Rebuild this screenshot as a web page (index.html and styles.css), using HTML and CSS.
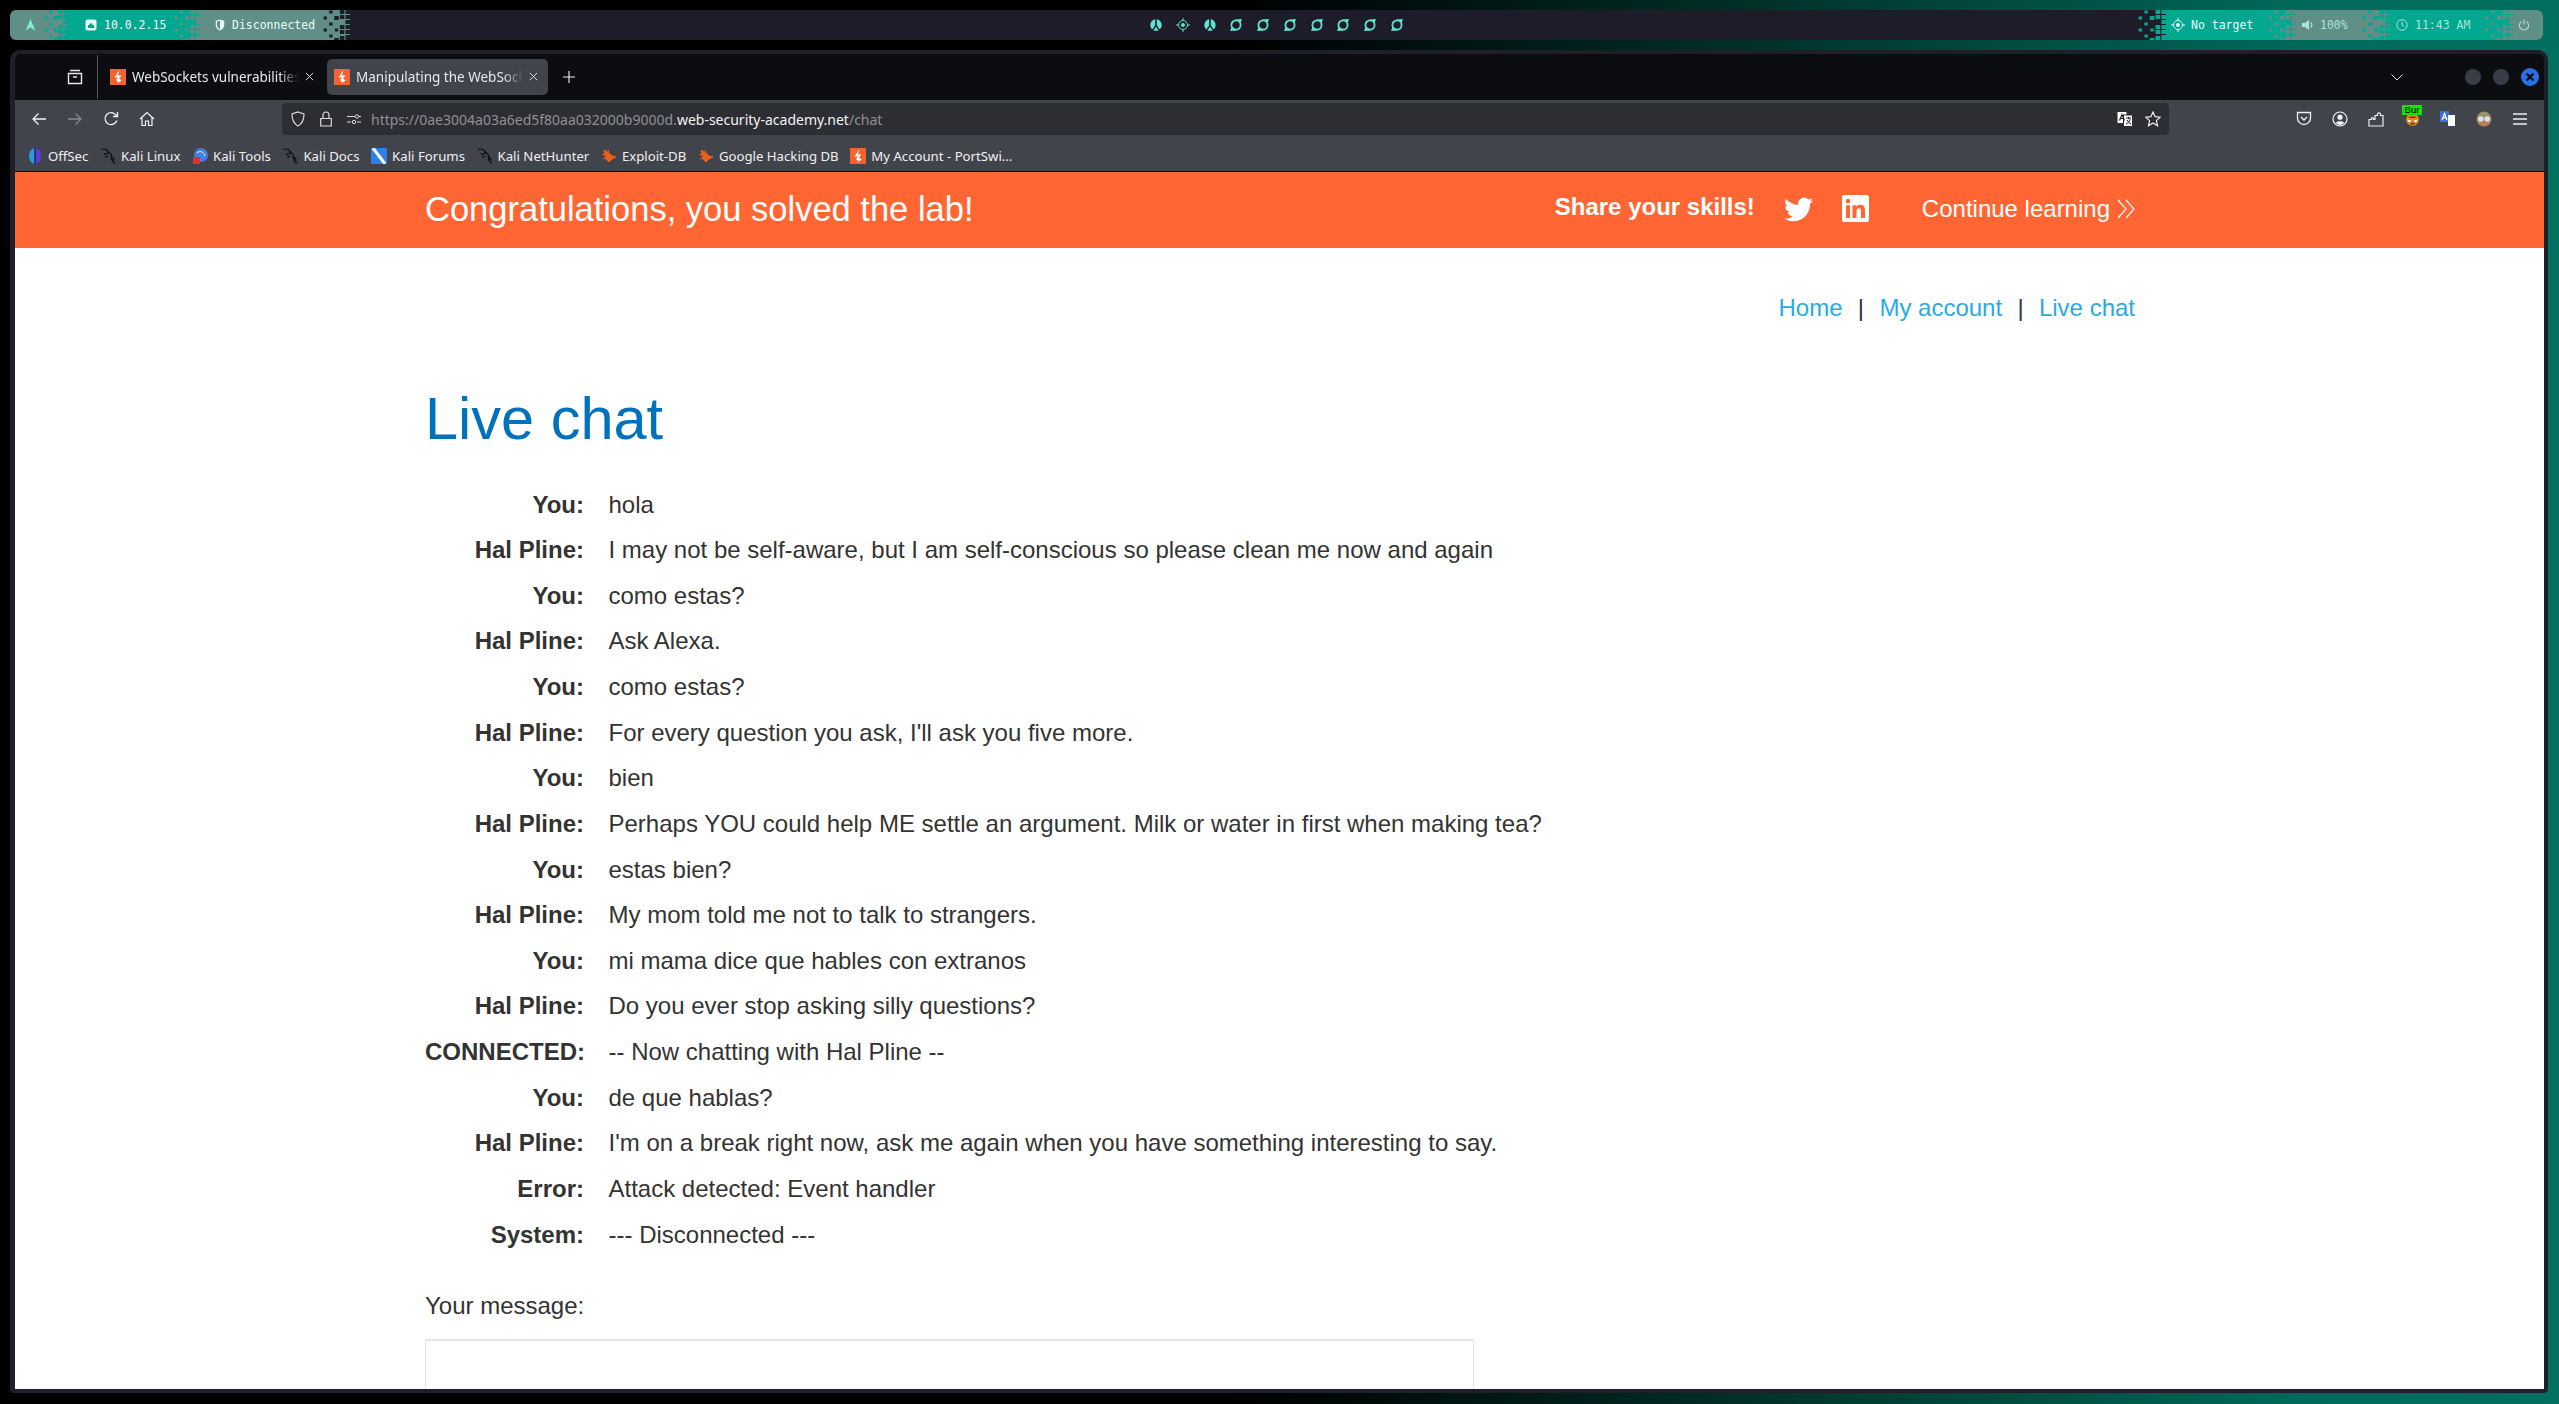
FILE: index.html
```html
<!DOCTYPE html>
<html lang="en">
<head>
<meta charset="utf-8">
<title>Live chat</title>
<link rel="stylesheet" href="styles.css">
</head>
<body>
<svg class="defs" aria-hidden="true">
  <symbol id="dither" viewBox="0 0 24 30" preserveAspectRatio="none">
    <rect x="0.5" y="6.5" width="3" height="3" class="o"/><rect x="0.5" y="18.5" width="3" height="3" class="o"/>
    <rect x="5.5" y="0.5" width="3" height="3" class="o"/><rect x="5.5" y="12.5" width="3" height="3" class="o"/><rect x="5.5" y="24.5" width="3" height="3" class="o"/>
    <rect x="10" y="6" width="4" height="4"/><rect x="10.5" y="18.5" width="3" height="3" class="o"/><rect x="10" y="28" width="4" height="2"/>
    <rect x="15" y="0" width="4" height="4"/><rect x="15" y="5" width="4" height="4"/><rect x="15" y="15" width="4" height="4"/><rect x="15" y="20" width="4" height="4"/><rect x="15" y="26" width="4" height="4"/>
    <rect x="20" y="0" width="4" height="4"/><rect x="20" y="5" width="4" height="4"/><rect x="20" y="10" width="4" height="4"/><rect x="20" y="15" width="4" height="4"/><rect x="20" y="20" width="4" height="4"/><rect x="20" y="25" width="4" height="5"/>
  </symbol>
  <symbol id="ps" viewBox="0 0 16 16">
    <rect width="16" height="16" fill="#f4622f"/>
    <path d="M9.500 1 4.500 8.500H8L6 11.200 8.600 13 6.600 15 11.600 11.600 9 9.600 11.500 6.600H8Z" fill="#fff"/>
  </symbol>
  <symbol id="kali" viewBox="0 0 16 16">
    <path d="M1 1.500C4 .5 7 1.500 8 3.500 9 5.500 7 6 6.500 5M8 3.500C10 5 12 7 11.500 9 11 11 12 13 15 15.500M11.500 9C13 9.500 14 11 14 12.500M6 7 4 5.500M8 8 5.500 9.500" fill="none" stroke="#0b0b0e" stroke-width="1.300"/>
  </symbol>
  <symbol id="bug" viewBox="0 0 16 16">
    <path d="M3 2 8 5 11 8 15 9 11 11 8 14 5 11 4 7ZM1 6 4 7M2 11 5 10M7 2 8 5" fill="#e8601c" stroke="#e8601c"/>
  </symbol>
  <symbol id="swirl" viewBox="0 0 14 14">
    <circle cx="7" cy="7" r="4.600" fill="none" stroke="currentColor" stroke-width="1.800"/>
    <path d="M6 1.500 13 1 11.500 5 9.500 2.600ZM8 12.500 1 13 2.500 9 4.500 11.400Z" fill="currentColor"/>
  </symbol>
  <symbol id="fan" viewBox="0 0 14 14">
    <path d="M6.200 1.200V7.200L3.400 11.600A6 6 0 0 1 6.200 1.200ZM7.800 1.200V7.200L10.600 11.600A6 6 0 0 0 7.800 1.200ZM7 8.600 9.600 12.800H4.400Z" fill="currentColor"/>
  </symbol>
  <symbol id="target" viewBox="0 0 14 14">
    <circle cx="7" cy="7" r="4.500" fill="none" stroke="currentColor" stroke-width="1"/>
    <circle cx="7" cy="7" r="2" fill="currentColor"/>
    <path d="M7 0V3M7 11V14M0 7H3M11 7H14" stroke="currentColor" stroke-width="1"/>
  </symbol>
  <symbol id="x" viewBox="0 0 10 10">
    <path d="M1 1 9 9M9 1 1 9" stroke="#e8e8ea" stroke-width="1"/>
  </symbol>
</svg>

<header class="bar">
  <div class="bar-left">
    <div class="seg gray seg-arch">
      <svg class="i12" viewBox="0 0 12 14"><path d="M6 1 11 13 6 9.600 1 13Z" fill="#7fe9dc"/></svg>
    </div>
    <svg class="dither d-left1 d-teal-on-gray"><use href="#dither"/></svg>
    <div class="seg teal seg-ip">
      <svg class="i11" viewBox="0 0 12 12"><rect x=".5" y=".5" width="11" height="11" rx="2" fill="#e6fff9"/><path d="M3 9V6H4.500V4.500H7.500V6H9V9Z" fill="#00a88f"/></svg>
      <span class="mono">10.0.2.15</span>
    </div>
    <svg class="dither d-left2 d-gray-on-teal"><use href="#dither"/></svg>
    <div class="seg gray seg-vpn">
      <svg class="i11" viewBox="0 0 12 14"><path d="M6 .5 11 2V7C11 10 8.500 12.500 6 13.500 3.500 12.500 1 10 1 7V2Z" fill="#e6fff9"/><path d="M6 2V12C4 11 2.500 9.200 2.500 7V3Z" fill="#5f8f86"/></svg>
      <span class="mono">Disconnected</span>
    </div>
    <svg class="dither d-left3 d-dark-on-gray"><use href="#dither"/></svg>
  </div>
  <div class="bar-center">
    <svg class="w14"><use href="#fan"/></svg>
    <svg class="w14"><use href="#target"/></svg>
    <svg class="w14"><use href="#fan"/></svg>
    <svg class="w14"><use href="#swirl"/></svg>
    <svg class="w14"><use href="#swirl"/></svg>
    <svg class="w14"><use href="#swirl"/></svg>
    <svg class="w14"><use href="#swirl"/></svg>
    <svg class="w14"><use href="#swirl"/></svg>
    <svg class="w14"><use href="#swirl"/></svg>
    <svg class="w14"><use href="#swirl"/></svg>
  </div>
  <div class="bar-right">
    <svg class="dither wide d-teal-on-dark"><use href="#dither"/></svg>
    <div class="seg teal seg-target">
      <svg class="w14 white"><use href="#target"/></svg>
      <span class="mono">No target</span>
    </div>
    <svg class="dither wide d-gray-on-teal"><use href="#dither"/></svg>
    <div class="seg gray seg-vol muted">
      <svg class="i11" viewBox="0 0 12 12"><path d="M0 4H3L7 1V11L3 8H0Z" fill="currentColor"/><path d="M8.500 3.500A3 3 0 0 1 8.500 8.500" fill="none" stroke="currentColor" stroke-width="1.300"/></svg>
      <span class="mono">100%</span>
    </div>
    <svg class="dither wide d-teal-on-gray"><use href="#dither"/></svg>
    <div class="seg teal seg-clock muted">
      <svg class="i11" viewBox="0 0 12 12"><circle cx="6" cy="6" r="5.200" fill="none" stroke="currentColor" stroke-width="1"/><path d="M6 2.800V6.300L8.200 7.400" fill="none" stroke="currentColor"/></svg>
      <span class="mono">11:43 AM</span>
    </div>
    <svg class="dither wide d-gray-on-teal"><use href="#dither"/></svg>
    <div class="seg gray seg-power muted">
      <svg class="i11" viewBox="0 0 12 12"><path d="M3.400 2.600A4.600 4.600 0 1 0 8.600 2.600M6 .8V5.600" fill="none" stroke="currentColor" stroke-width="1.100"/></svg>
    </div>
  </div>
</header>

<div class="window">
  <div class="tabbar">
    <div class="fx-view">
      <svg class="i16" viewBox="0 0 16 16"><path d="M3 1.500H13M1.500 4.500H14.500V14.500H1.500ZM6 8H10" fill="none" stroke="#e6e6e8" stroke-width="1.400"/></svg>
    </div>
    <div class="tab">
      <svg class="fav"><use href="#ps"/></svg>
      <span class="tab-title">WebSockets vulnerabilities</span>
      <svg class="tab-x"><use href="#x"/></svg>
    </div>
    <div class="tab active">
      <svg class="fav"><use href="#ps"/></svg>
      <span class="tab-title">Manipulating the WebSock</span>
      <svg class="tab-x"><use href="#x"/></svg>
    </div>
    <svg class="newtab" viewBox="0 0 14 14"><path d="M7 1V13M1 7H13" stroke="#f0f0f2" stroke-width="1.100"/></svg>
    <div class="tab-spacer"></div>
    <svg class="chev" viewBox="0 0 12 7"><path d="M.5.5 6 6 11.500.5" fill="none" stroke="#e0e0e2" stroke-width="1"/></svg>
    <div class="winbtns">
      <span class="dot"></span>
      <span class="dot"></span>
      <span class="dot close"><svg viewBox="0 0 10 10"><path d="M1.500 1.500 8.500 8.500M8.500 1.500 1.500 8.500" stroke="#0c0d11" stroke-width="2.400"/></svg></span>
    </div>
  </div>

  <div class="navbar">
    <div class="nav-btns">
      <svg class="i16" viewBox="0 0 16 16"><path d="M15 8H2M7.500 2.500 2 8l5.500 5.500" fill="none" stroke="#f3f3f4" stroke-width="1.300"/></svg>
      <svg class="i16" viewBox="0 0 16 16"><path d="M1 8H14M8.500 2.500 14 8l-5.500 5.500" fill="none" stroke="#8b8c92" stroke-width="1.300"/></svg>
      <svg class="i16" viewBox="0 0 16 16"><path d="M13.800 9.500A6 6 0 1 1 12.500 3.600L14 5M14.500 1V5.500H10" fill="none" stroke="#f3f3f4" stroke-width="1.300"/></svg>
      <svg class="i16" viewBox="0 0 16 16"><path d="M1 8 8 1.500 15 8M3 6.500V14.500H6.500V10H9.500V14.500H13V6.500" fill="none" stroke="#f3f3f4" stroke-width="1.200"/></svg>
    </div>
    <div class="urlbar">
      <svg class="i16" viewBox="0 0 16 16"><path d="M8 1 14 3C14 9 12.500 12.500 8 15 3.500 12.500 2 9 2 3Z" fill="none" stroke="#dcdcde" stroke-width="1.200"/></svg>
      <svg class="i16" viewBox="0 0 16 16"><path d="M2.700 7.500H13.300V15H2.700ZM5 7.500V4A3 3 0 0 1 11 4V7.500" fill="none" stroke="#dcdcde" stroke-width="1.200"/></svg>
      <svg class="i16" viewBox="0 0 16 16"><path d="M1 5.500H9M1 11H5M11 11H15M13 5.500H15" fill="none" stroke="#dcdcde" stroke-width="1.200"/><circle cx="11" cy="5.500" r="1.700" fill="none" stroke="#dcdcde"/><circle cx="8" cy="11" r="1.700" fill="none" stroke="#dcdcde"/></svg>
      <div class="url"><span class="dim">https://0ae3004a03a6ed5f80aa032000b9000d.</span>web-security-academy.net<span class="dim">/chat</span></div>
      <svg class="i16" viewBox="0 0 16 16"><rect x=".5" y="1" width="9" height="11" fill="#fff"/><rect x="6.500" y="4" width="9" height="11.500" fill="#fff" stroke="#2d2e33"/><path d="M2.500 9.500 5 3.500 7.500 9.500M3.500 7.500H6.500" fill="none" stroke="#222" stroke-width="1.200"/><path d="M9 7H14M11.500 6V8M13 8C12.500 11 10.500 12.500 9 13M10 9C11 11 12.500 12.500 14 13" fill="none" stroke="#222"/></svg>
      <svg class="i16" viewBox="0 0 16 16"><path d="M8 1 10.100 5.700 15.200 6.200 11.400 9.600 12.500 14.700 8 12 3.500 14.700 4.600 9.600.8 6.200 5.900 5.700Z" fill="none" stroke="#f0f0f2" stroke-width="1.200"/></svg>
    </div>
    <div class="tools">
      <svg class="i16" viewBox="0 0 16 16"><path d="M1.500 1.500H14.500V7A6.500 6.500 0 0 1 1.500 7ZM5 6 8 9 11 6" fill="none" stroke="#f0f0f2" stroke-width="1.300"/></svg>
      <svg class="i16" viewBox="0 0 16 16"><circle cx="8" cy="8" r="7" fill="none" stroke="#f0f0f2" stroke-width="1.200"/><circle cx="8" cy="6.200" r="2.600" fill="#f0f0f2"/><path d="M3.500 12C5 9.800 11 9.800 12.500 12L8 14.500Z" fill="#f0f0f2"/></svg>
      <svg class="i16" viewBox="0 0 16 16"><path d="M1 15V8.500H3.500C2.500 6 6.500 6 5.500 8.500H7V4.500H9.500C8.500 1 13.500 1 12.500 4.500H15V15Z" fill="none" stroke="#f0f0f2" stroke-width="1.200"/></svg>
      <span class="burp"><svg class="burp-face" viewBox="0 0 14 10"><circle cx="7" cy="4" r="6" fill="#e8801c"/><path d="M2 4 6 5 4 7ZM12 4 8 5 10 7Z" fill="#fff"/><path d="M4 2H10M5 8H9" stroke="#222"/></svg><span class="burp-tag">Bur</span></span>
      <svg class="i16" viewBox="0 0 16 16"><rect x="0" y="0" width="9" height="11" fill="#3f6fd8"/><rect x="8" y="4" width="7" height="11" fill="#fff"/><path d="M2 9 4.500 2.500 7 9M3 6.800H6" fill="none" stroke="#fff" stroke-width="1.200"/></svg>
      <svg class="i16" viewBox="0 0 16 16"><circle cx="8" cy="8" r="7.500" fill="#b57f5b"/><path d="M2 5C4 0 12 0 14 5Z" fill="#8a9a6a"/><circle cx="4.800" cy="8" r="2.800" fill="#cfe6ea"/><circle cx="11.200" cy="8" r="2.800" fill="#cfe6ea"/></svg>
      <svg class="i16" viewBox="0 0 16 16"><path d="M1 3H15M1 8H15M1 13H15" stroke="#f0f0f2" stroke-width="1.300"/></svg>
    </div>
  </div>

  <nav class="bookmarks">
    <a class="bm"><svg class="i16" viewBox="0 0 16 16"><ellipse cx="8" cy="8" rx="6" ry="8" fill="#5a3fd0"/><path d="M8 0C4 1 2 4 2 8s2 7 6 8Z" fill="#2a9ad8"/><rect x="7.400" width="1.200" height="16" fill="#0c1a30"/></svg>OffSec</a>
    <a class="bm"><svg class="i16"><use href="#kali"/></svg>Kali Linux</a>
    <a class="bm"><svg class="i16" viewBox="0 0 16 16"><circle cx="9" cy="7" r="7" fill="#3f7fe0"/><path d="M5 5C8 2 12 4 13 8" fill="none" stroke="#fff"/><rect x="1" y="9" width="7" height="7" fill="#e03030"/></svg>Kali Tools</a>
    <a class="bm"><svg class="i16"><use href="#kali"/></svg>Kali Docs</a>
    <a class="bm"><svg class="i16" viewBox="0 0 16 16"><rect width="16" height="16" rx="1" fill="#2f7fe8"/><path d="M2 0 14 16" stroke="#fff" stroke-width="3"/></svg>Kali Forums</a>
    <a class="bm"><svg class="i16"><use href="#kali"/></svg>Kali NetHunter</a>
    <a class="bm"><svg class="i16"><use href="#bug"/></svg>Exploit-DB</a>
    <a class="bm"><svg class="i16"><use href="#bug"/></svg>Google Hacking DB</a>
    <a class="bm"><svg class="i16"><use href="#ps"/></svg>My Account - PortSwi...</a>
  </nav>

  <div class="page">
    <section class="banner">
      <h4 class="solved">Congratulations, you solved the lab!</h4>
      <div class="share">
        <span class="share-label">Share your skills!</span>
        <svg class="tw" viewBox="0 0 24 24"><path fill="#fff" d="M23.953 4.57a10 10 0 01-2.825.775 4.958 4.958 0 002.163-2.723c-.951.555-2.005.959-3.127 1.184a4.92 4.92 0 00-8.384 4.482C7.69 8.095 4.067 6.13 1.64 3.162a4.822 4.822 0 00-.666 2.475c0 1.71.87 3.213 2.188 4.096a4.904 4.904 0 01-2.228-.616v.06a4.923 4.923 0 003.946 4.827 4.996 4.996 0 01-2.212.085 4.936 4.936 0 004.604 3.417 9.867 9.867 0 01-6.102 2.105c-.39 0-.779-.023-1.17-.067a13.995 13.995 0 007.557 2.209c9.053 0 13.998-7.496 13.998-13.985 0-.21 0-.42-.015-.63A9.935 9.935 0 0024 4.59z"/></svg>
        <svg class="li" viewBox="0 0 24 24" preserveAspectRatio="none"><path fill="#fff" d="M20.447 20.452h-3.554v-5.569c0-1.328-.027-3.037-1.852-3.037-1.853 0-2.136 1.445-2.136 2.939v5.667H9.351V9h3.414v1.561h.046c.477-.9 1.637-1.85 3.37-1.85 3.601 0 4.267 2.37 4.267 5.455v6.286zM5.337 7.433c-1.144 0-2.063-.926-2.063-2.065 0-1.138.92-2.063 2.063-2.063 1.14 0 2.064.925 2.064 2.063 0 1.139-.925 2.065-2.064 2.065zm1.782 13.019H3.555V9h3.564v11.452zM22.225 0H1.771C.792 0 0 .774 0 1.729v20.542C0 23.227.792 24 1.771 24h20.451C23.2 24 24 23.227 24 22.271V1.729C24 .774 23.2 0 22.222 0h.003z"/></svg>
      </div>
      <a class="continue">Continue learning
        <svg class="dbl" viewBox="0 0 18 20"><path d="M1 1 9 10 1 19M9 1 17 10 9 19" fill="none" stroke="#fff" stroke-width="1.200"/></svg>
      </a>
    </section>

    <main class="content">
      <div class="topnav">
        <a>Home</a><span class="sep">|</span><a>My account</a><span class="sep">|</span><a>Live chat</a>
      </div>
      <h1 class="title">Live chat</h1>
      <div class="chat">
        <b>You:</b><span>hola</span>
        <b>Hal Pline:</b><span>I may not be self-aware, but I am self-conscious so please clean me now and again</span>
        <b>You:</b><span>como estas?</span>
        <b>Hal Pline:</b><span>Ask Alexa.</span>
        <b>You:</b><span>como estas?</span>
        <b>Hal Pline:</b><span>For every question you ask, I'll ask you five more.</span>
        <b>You:</b><span>bien</span>
        <b>Hal Pline:</b><span>Perhaps YOU could help ME settle an argument. Milk or water in first when making tea?</span>
        <b>You:</b><span>estas bien?</span>
        <b>Hal Pline:</b><span>My mom told me not to talk to strangers.</span>
        <b>You:</b><span>mi mama dice que hables con extranos</span>
        <b>Hal Pline:</b><span>Do you ever stop asking silly questions?</span>
        <b>CONNECTED:</b><span>-- Now chatting with Hal Pline --</span>
        <b>You:</b><span>de que hablas?</span>
        <b>Hal Pline:</b><span>I'm on a break right now, ask me again when you have something interesting to say.</span>
        <b>Error:</b><span>Attack detected: Event handler</span>
        <b>System:</b><span>--- Disconnected ---</span>
      </div>
      <label class="msg-label">Your message:</label>
      <div class="msg-box"></div>
    </main>
  </div>
</div>
</body>
</html>
```

FILE: styles.css
```css
* { box-sizing: border-box; }
html, body { margin: 0; height: 1404px; overflow: hidden; }
body {
  background: linear-gradient(90deg, #000 0, #000 48%, #00201b 62%, #004a3e 78%, #006a5a 90%, #02705f 100%);
  font-family: "Liberation Sans", Arial, sans-serif;
  padding: 10px 16px 0 10px;
}
.defs { display: none; }

/* top status bar */
.bar {
  display: grid;
  grid-template-columns: 1fr auto 1fr;
  height: 30px;
  background: #1e1c28;
  border-radius: 6px;
  overflow: hidden;
  align-items: stretch;
  color: #eafff9;
}
.bar-left, .bar-right, .seg { display: flex; align-items: center; }
.bar-right { justify-content: flex-end; }
.seg { height: 30px; flex: none; }
.teal { background: #00a88f; }
.gray { background: #5f8f86; }
.muted { color: #a9e6da; }
.seg-arch { width: 34px; padding-left: 14px; }
.seg-ip { width: 107px; padding-left: 18px; gap: 7px; }
.seg-vpn { width: 123px; padding-left: 14px; gap: 6px; }
.seg-target { width: 102px; padding-left: 5px; gap: 6px; }
.seg-vol { width: 66px; padding-left: 6px; gap: 6px; }
.seg-clock { width: 95px; padding-left: 6px; gap: 7px; }
.seg-power { width: 30px; padding-left: 5px; }
.mono {
  font-family: "DejaVu Sans Mono", monospace;
  font-size: 11.500px;
  white-space: nowrap;
}
.dither { height: 30px; flex: none; }
.d-left1 { width: 23px; }
.d-left2 { width: 26px; }
.d-left3 { width: 27px; }
.dither.wide { width: 28px; }
.d-teal-on-gray { background: #5f8f86; fill: #00a88f; }
.d-gray-on-teal { background: #00a88f; fill: #5f8f86; }
.d-dark-on-gray { background: #5f8f86; fill: #1e1c28; }
.d-teal-on-dark { background: #1e1c28; fill: #00a88f; }
.i11 { width: 12px; height: 12px; flex: none; }
.i12 { width: 13px; height: 14px; flex: none; }
.i16 { width: 16px; height: 16px; flex: none; }
.w14 { width: 14px; height: 14px; flex: none; color: #5fe3d0; }
.w14.white { color: #eafff9; }
.bar-center { display: flex; align-items: center; gap: 12.700px; }

/* browser window */
.window {
  margin: 10px 0 0;
  width: 2538px;
  height: 1343px;
  border: 4px solid #1e1f28;
  border-left-width: 5px;
  border-radius: 10px 10px 4px 4px;
  background: #0c0d11;
  overflow: hidden;
  display: flex;
  flex-direction: column;
}
.tabbar {
  height: 46px;
  flex: none;
  display: flex;
  align-items: center;
  color: #f0f0f2;
  font-family: "Noto Sans", sans-serif;
}
.fx-view {
  width: 83px;
  height: 44px;
  flex: none;
  display: flex;
  align-items: center;
  justify-content: flex-end;
  padding-right: 14px;
  border-right: 1px solid #55565c;
}
.tab {
  width: 221px;
  height: 36px;
  flex: none;
  margin-left: 5px;
  border-radius: 5px;
  display: flex;
  align-items: center;
  padding-left: 7px;
  gap: 6px;
  font-size: 13.500px;
  color: #e8e8ea;
}
.tab + .tab { margin-left: 3px; }
.tab.active { background: #42444c; }
.fav { width: 16px; height: 16px; flex: none; }
.tab-title {
  width: 167px;
  flex: none;
  white-space: nowrap;
  -webkit-mask-image: linear-gradient(90deg, #000 88%, transparent);
  mask-image: linear-gradient(90deg, #000 88%, transparent);
}
.tab-x { width: 9px; height: 9px; flex: none; margin-top: -2px; }
.newtab { width: 14px; height: 14px; margin-left: 14px; flex: none; }
.tab-spacer { flex: 1; }
.chev { width: 12px; height: 7px; margin-right: 62px; flex: none; }
.winbtns { display: flex; align-items: center; gap: 12px; padding-right: 5px; }
.dot { width: 16px; height: 16px; border-radius: 50%; background: #3a3d48; display: flex; align-items: center; justify-content: center; }
.dot.close { width: 18px; height: 18px; background: #2a6fe8; }
.dot.close svg { width: 10px; height: 10px; }

.navbar {
  height: 38px;
  flex: none;
  background: #42444c;
  display: flex;
  align-items: center;
}
.nav-btns { display: flex; gap: 20px; padding-left: 16px; width: 267px; flex: none; }
.urlbar {
  width: 1887px;
  height: 32px;
  background: #2d2e33;
  border-radius: 4px;
  display: flex;
  align-items: center;
  gap: 12px;
  padding: 0 8px;
  flex: none;
}
.url {
  flex: 1;
  font-family: "Noto Sans", sans-serif;
  font-size: 14px;
  color: #f2f2f3;
  white-space: nowrap;
  margin-left: -3px;
}
.dim { color: #8f9096; }
.tools { display: flex; align-items: center; gap: 20px; padding-left: 127px; }
.burp { position: relative; width: 16px; height: 16px; flex: none; }
.burp-tag {
  position: absolute;
  left: -2px;
  top: -6px;
  width: 20px;
  height: 10px;
  background: #19e000;
  color: #000;
  font-size: 9.500px;
  line-height: 10px;
  text-align: center;
  font-family: "Liberation Sans", sans-serif;
}
.burp-face { position: absolute; left: 1px; top: 4px; width: 15px; height: 11px; }

.bookmarks {
  height: 34px;
  flex: none;
  background: #42444c;
  border-bottom: 1px solid #0c0d11;
  display: flex;
  align-items: center;
  gap: 11.600px;
  padding: 2px 0 0 12px;
  font-family: "Noto Sans", sans-serif;
  font-size: 13.200px;
  color: #f0f0f2;
}
.bm { display: flex; align-items: center; gap: 5px; white-space: nowrap; }

/* page */
.page { flex: 1; background: #fff; overflow: hidden; color: #333332; }
.banner {
  height: 76px;
  background: #ff6633;
  color: #fff;
  display: flex;
  align-items: center;
  padding: 0 409px 2px 410px;
}
.solved { margin: 0; font-size: 34.500px; font-weight: 400; flex: 1; white-space: nowrap; }
.share { display: flex; align-items: center; }
.share-label { font-size: 24px; font-weight: 700; margin-right: 29px; position: relative; top: -2px; }
.tw { width: 29px; height: 29px; margin-right: 29px; }
.li { width: 27px; height: 27px; position: relative; top: -1px; }
.continue { display: flex; align-items: center; font-size: 24px; margin-left: 53px; gap: 7px; white-space: nowrap; }
.dbl { width: 18px; height: 20px; }

.content { padding: 0 409px 0 410px; font-size: 24px; line-height: 1.4; }
.topnav {
  display: flex;
  justify-content: flex-end;
  padding-top: 43px;
  gap: 15.300px;
  color: #333332;
}
.topnav a { color: #29abe2; }
.sep { color: #333332; }
.title {
  margin: 61.500px 0 0;
  font-size: 59.500px;
  font-weight: 400;
  color: #0071bc;
  line-height: 1.1;
}
.chat {
  display: grid;
  grid-template-columns: 159px 1fr;
  column-gap: 24.500px;
  grid-auto-rows: 45.640px;
  margin-top: 30px;
  line-height: 45.640px;
}
.chat b { text-align: right; white-space: nowrap; }
.msg-label { display: block; margin-top: 31px; line-height: 36px; }
.msg-box { width: 1049px; height: 120px; margin-top: 15px; border: 1px solid #e6e6e6; border-top-width: 2px; }
```
